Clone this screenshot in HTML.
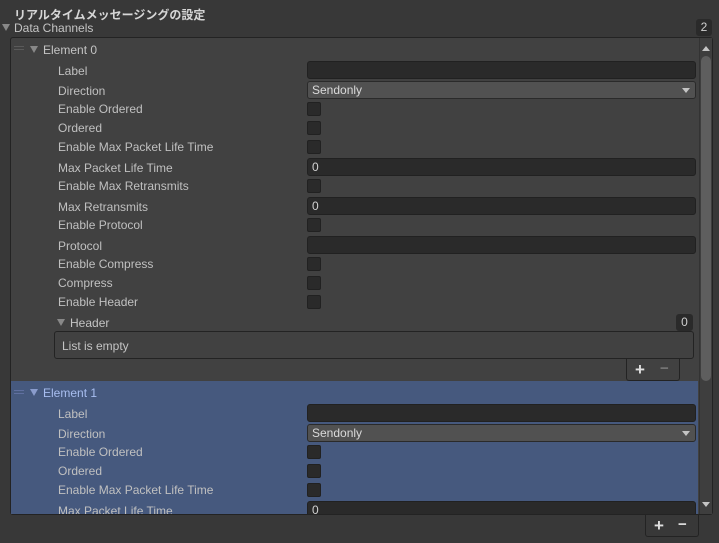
<!DOCTYPE html>
<html><head><style>
*{margin:0;padding:0;box-sizing:border-box}
body{width:719px;height:543px;background:#383838;font-family:"Liberation Sans","Noto Sans CJK JP",sans-serif;font-size:12px;color:#c4c4c4;position:relative;overflow:hidden}
.a{position:absolute;white-space:nowrap}
.lab{position:absolute;left:58px;color:#c0c0c0;margin-top:1px}
.tf{position:absolute;left:307px;width:389px;height:18px;background:#2a2a2a;border:1px solid #212121;border-radius:3px;padding-left:4px;line-height:17px;color:#d2d2d2}
.dd{position:absolute;left:307px;width:389px;height:18px;background:#515151;border:1px solid #2a2a2a;border-radius:3px;padding-left:4px;line-height:16px;color:#dadada}
.dd:after{content:"";position:absolute;right:5px;top:6px;border-left:4px solid transparent;border-right:4px solid transparent;border-top:5px solid #c4c4c4}
.cb{position:absolute;left:307px;width:14px;height:14px;background:#2a2a2a;border:1px solid #212121;border-radius:2px}
.tri{position:absolute;width:0;height:0;border-left:4px solid transparent;border-right:4px solid transparent;border-top:7px solid #888}
</style></head><body>
<div class="a" style="left:14px;top:6px;color:#d6d6d6;font-weight:bold">リアルタイムメッセージングの設定</div>
<div class="tri" style="left:2px;top:24px"></div>
<div class="a" style="left:14px;top:21px;color:#c4c4c4">Data Channels</div>
<div class="a" style="left:696px;top:19px;width:16px;height:17px;background:#2a2a2a;border-radius:3px;text-align:center;line-height:17px;color:#d0d0d0">2</div>
<div class="a" style="left:10px;top:37px;width:703px;height:478px;background:#414141;border:1px solid #232323;border-radius:3px"></div>
<div class="a" style="left:11px;top:381px;width:687px;height:133px;background:#46597e"></div>
<div class="a" style="left:699px;top:38px;width:13px;height:476px;background:#3e3e3e;border-left:1px solid #333"></div>
<div class="a" style="left:701px;top:56px;width:10px;height:325px;background:#5e5e5e;border-radius:5px"></div>
<div class="a" style="left:702px;top:46px;border-left:4px solid transparent;border-right:4px solid transparent;border-bottom:5px solid #c4c4c4"></div>
<div class="a" style="left:702px;top:502px;border-left:4px solid transparent;border-right:4px solid transparent;border-top:5px solid #c4c4c4"></div>

<div class="a" style="left:14px;top:46px;width:10px;height:4px;border-top:1px solid #5a5a5a;border-bottom:1px solid #5a5a5a"></div>
<div class="tri" style="left:30px;top:46px"></div>
<div class="a" style="left:43px;top:43px">Element 0</div>
<div class="lab" style="top:63px">Label</div><div class="tf" style="top:61px"></div>
<div class="lab" style="top:83px">Direction</div><div class="dd" style="top:81px">Sendonly</div>
<div class="lab" style="top:101px">Enable Ordered</div><div class="cb" style="top:102px"></div>
<div class="lab" style="top:120px">Ordered</div><div class="cb" style="top:121px"></div>
<div class="lab" style="top:139px">Enable Max Packet Life Time</div><div class="cb" style="top:140px"></div>
<div class="lab" style="top:160px">Max Packet Life Time</div><div class="tf" style="top:158px">0</div>
<div class="lab" style="top:178px">Enable Max Retransmits</div><div class="cb" style="top:179px"></div>
<div class="lab" style="top:199px">Max Retransmits</div><div class="tf" style="top:197px">0</div>
<div class="lab" style="top:217px">Enable Protocol</div><div class="cb" style="top:218px"></div>
<div class="lab" style="top:238px">Protocol</div><div class="tf" style="top:236px"></div>
<div class="lab" style="top:256px">Enable Compress</div><div class="cb" style="top:257px"></div>
<div class="lab" style="top:275px">Compress</div><div class="cb" style="top:276px"></div>
<div class="lab" style="top:294px">Enable Header</div><div class="cb" style="top:295px"></div>
<div class="tri" style="left:57px;top:319px"></div>
<div class="a" style="left:70px;top:316px">Header</div>
<div class="a" style="left:676px;top:314px;width:17px;height:17px;background:#2a2a2a;border-radius:3px;text-align:center;line-height:17px;color:#d0d0d0">0</div>
<div class="a" style="left:54px;top:331px;width:640px;height:28px;background:#414141;border:1px solid #232323;border-radius:3px;padding:7px 0 0 7px">List is empty</div>
<div class="a" style="left:626px;top:358px;width:54px;height:23px;border:1px solid #232323;border-top:none;border-radius:0 0 3px 3px"></div>
<div class="a" style="left:635px;top:360px;font-size:17px;font-weight:bold;color:#e0e0e0">+</div>
<div class="a" style="left:660px;top:360px;font-size:15px;font-weight:bold;color:#777">−</div>

<div class="a" style="left:14px;top:390px;width:10px;height:4px;border-top:1px solid #6070a0;border-bottom:1px solid #6070a0"></div>
<div class="tri" style="left:30px;top:389px;border-top-color:#8a9ccc"></div>
<div class="a" style="left:43px;top:386px;color:#a8bef0">Element 1</div>
<div class="lab" style="top:406px">Label</div><div class="tf" style="top:404px"></div>
<div class="lab" style="top:426px">Direction</div><div class="dd" style="top:424px">Sendonly</div>
<div class="lab" style="top:444px">Enable Ordered</div><div class="cb" style="top:445px"></div>
<div class="lab" style="top:463px">Ordered</div><div class="cb" style="top:464px"></div>
<div class="lab" style="top:482px">Enable Max Packet Life Time</div><div class="cb" style="top:483px"></div>
<div class="a" style="left:11px;top:501px;width:687px;height:13px;overflow:hidden">
<div class="lab" style="left:47px;top:2px">Max Packet Life Time</div><div class="tf" style="left:296px;top:0">0</div></div>

<div class="a" style="left:645px;top:514px;width:54px;height:23px;border:1px solid #232323;border-top:none;border-radius:0 0 3px 3px"></div>
<div class="a" style="left:654px;top:516px;font-size:17px;font-weight:bold;color:#e0e0e0">+</div>
<div class="a" style="left:678px;top:516px;font-size:15px;font-weight:bold;color:#e0e0e0">−</div>
</body></html>
